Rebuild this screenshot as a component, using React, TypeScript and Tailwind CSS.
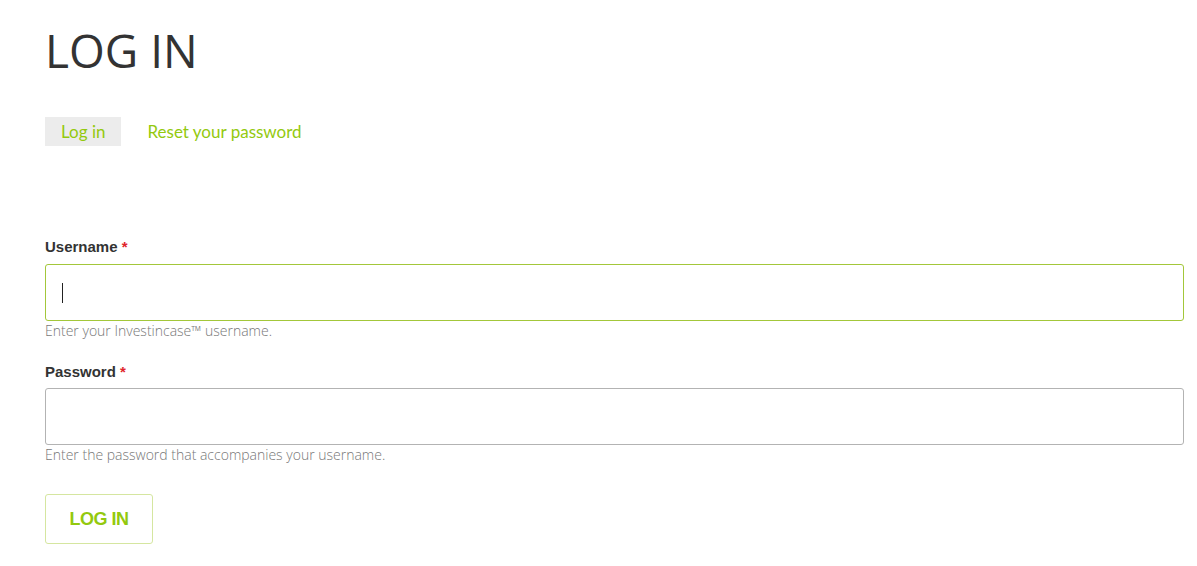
export default function App() {
  return (
    <div className="min-h-screen bg-white px-[45px] pt-[22px] font-['Lato',sans-serif] text-[#333]">
      <h1 className="font-['Open_Sans',sans-serif] text-[46px] font-normal leading-[56px] text-[#333]">
        LOG IN
      </h1>

      <div className="mt-[39px] flex items-center gap-[26px] text-[17px]">
        <a className="bg-[#ececec] px-[16px] leading-[29px] text-[#93c90e]">Log in</a>
        <a className="leading-[29px] text-[#93c90e]">Reset your password</a>
      </div>

      <form className="mt-[91px] w-[1139px]">
        <label className="block font-['Liberation_Sans',sans-serif] text-[15px] font-bold leading-[20px] text-[#333]">
          Username <span className="text-[#e0252b]">*</span>
        </label>
        <div className="mt-[7px] flex h-[57px] items-center rounded-[3px] border border-[#a3c73a] px-[16px]">
          <span className="h-[20px] w-px bg-[#222]" />
        </div>
        <p className="mt-[1px] font-['Open_Sans',sans-serif] text-[14px] font-light leading-[18px] text-[#777]">
          Enter your Investincase™ username.
        </p>

        <label className="mt-[22px] block font-['Liberation_Sans',sans-serif] text-[15px] font-bold leading-[20px] text-[#333]">
          Password <span className="text-[#e0252b]">*</span>
        </label>
        <div className="mt-[6px] h-[57px] rounded-[3px] border border-[#b3b3b3]" />
        <p className="mt-[1px] font-['Open_Sans',sans-serif] text-[14px] font-light leading-[18px] text-[#777]">
          Enter the password that accompanies your username.
        </p>

        <button
          type="button"
          className="mt-[30px] h-[50px] w-[108px] rounded-[3px] border border-[#d5e6a0] bg-white font-['Liberation_Sans',sans-serif] text-[18px] font-bold tracking-[-0.5px] text-[#93c90e]"
        >
          LOG IN
        </button>
      </form>
    </div>
  );
}
